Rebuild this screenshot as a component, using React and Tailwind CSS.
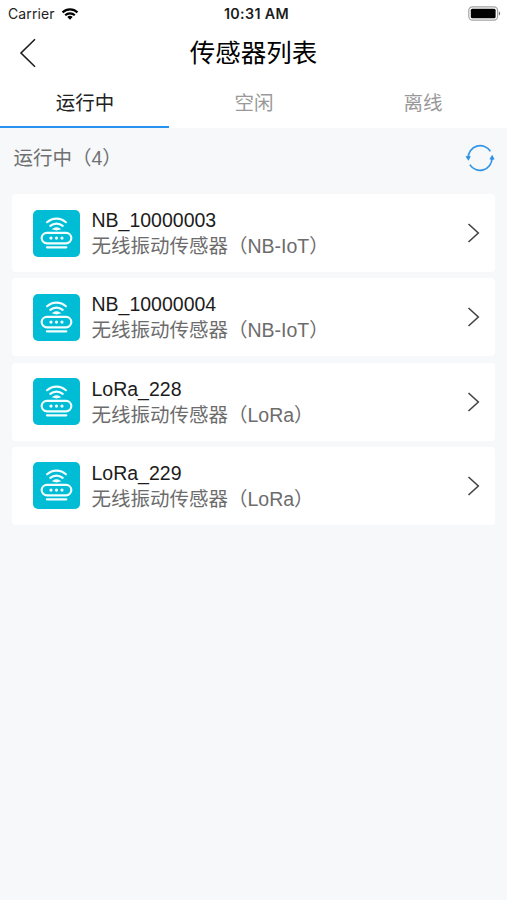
const sensors = [
  { name: 'NB_10000003', type: '无线振动传感器（NB-IoT）' },
  { name: 'NB_10000004', type: '无线振动传感器（NB-IoT）' },
  { name: 'LoRa_228', type: '无线振动传感器（LoRa）' },
  { name: 'LoRa_229', type: '无线振动传感器（LoRa）' },
];

const tabs = ['运行中', '空闲', '离线'];

function WifiIcon() {
  return (
    <svg className="ml-[6px] h-[12px] w-[18px]" viewBox="0 0 17 12" fill="none" stroke="#000" strokeWidth="2.2">
      <path d="M1 4.4a10.8 10.8 0 0 1 15 0" />
      <path d="M3.7 7.3a6.8 6.8 0 0 1 9.6 0" />
      <path d="M8.5 11.8 5.8 9a3.9 3.9 0 0 1 5.4 0z" fill="#000" stroke="none" />
    </svg>
  );
}

function BatteryIcon() {
  return (
    <svg className="h-[15px] w-[33px]" viewBox="0 0 33 15">
      <rect x="0.8" y="0.8" width="28.8" height="13.4" rx="3.6" fill="none" stroke="#a3a3a3" strokeWidth="1.2" />
      <rect x="2.8" y="2.8" width="24.8" height="9.4" rx="1.5" fill="#000" />
      <path d="M30.9 5.5c1.7.5 1.7 3.5 0 4z" fill="#777" />
    </svg>
  );
}

function RefreshIcon() {
  return (
    <svg className="h-[30px] w-[30px]" viewBox="0 0 30 30" fill="none" stroke="#3596e8" strokeWidth="1.7">
      <path d="M3.2 14.8A12 12 0 0 1 25.4 8.4" />
      <path d="M27 15.2A12 12 0 0 1 4.8 21.6" />
      <path d="M.6 13.6 3 12.8l2.8.8-2.4 4.2zM24.4 16.2l2.8.8 2.4-.8-2.4-4.4z" fill="#2f92e6" stroke="none" />
    </svg>
  );
}

function RouterIcon() {
  return (
    <svg
      className="h-[47px] w-[47px] shrink-0 rounded-[5px] bg-[#00bcd4]"
      viewBox="0 0 47 47"
      fill="none"
      stroke="#f2fdff"
      strokeWidth="2.2"
      strokeLinecap="round"
    >
      <path d="M14.1 12.2a14 14 0 0 1 18.8 0M17.3 15.8a9.6 9.6 0 0 1 12.4 0" />
      <path d="M20.3 19a5.6 5.6 0 0 1 6.4 0l-3.2.8z" fill="#f2fdff" strokeWidth="1.4" />
      <rect x="8.7" y="22.9" width="29.6" height="10.4" rx="5.2" />
      <path d="M13.9 37.3h19.4" />
      <g fill="#f2fdff" stroke="none">
        <circle cx="18" cy="28.1" r="1.6" />
        <circle cx="23.5" cy="28.1" r="1.6" />
        <circle cx="29" cy="28.1" r="1.6" />
      </g>
    </svg>
  );
}

export default function App() {
  return (
    <div className="flex h-[900px] w-[507px] flex-col overflow-hidden bg-[#f6f8fa] font-['Liberation_Sans','Noto_Sans_CJK_SC',sans-serif] text-[19.5px] text-[#1c1c1c]">
      <header className="bg-white">
        <div className="grid h-[27px] grid-cols-[1fr_auto_1fr] items-center pr-[6px] pl-[8px] font-['Inter',sans-serif] text-[14px] leading-none">
          <div className="flex items-center pt-px tracking-[0.1px] text-[#222]">
            Carrier
            <WifiIcon />
          </div>
          <div className="pt-px pl-[4px] text-[14.3px] font-semibold tracking-[0.35px]">10:31 AM</div>
          <div className="flex justify-end"><BatteryIcon /></div>
        </div>
        <div className="grid h-[51px] grid-cols-[50px_1fr_50px] items-center">
          <svg className="ml-[19px] h-[30px] w-[18px]" viewBox="0 0 18 30" fill="none" stroke="#1c1c1c" strokeWidth="1.6">
            <path d="M16 1.2 2 15l14 13.8" />
          </svg>
          <h1 className="pt-px text-center text-[25.5px] leading-[36px] text-black">传感器列表</h1>
        </div>
        <nav className="grid h-[50px] grid-cols-3">
          {tabs.map((tab, i) => (
            <button
              key={tab}
              className={
                i === 0
                  ? 'border-b-2 border-[#2593ef] pt-[3px] pl-px text-center text-[#222]'
                  : 'border-b-2 border-transparent pt-[3px] pl-px text-center text-[#999]'
              }
            >
              {tab}
            </button>
          ))}
        </nav>
      </header>
      <div className="flex h-[66px] items-start justify-between pr-[12px] pl-[13.5px]">
        <h2 className="pt-[15px] leading-[30px] text-[#707070]">运行中（4）</h2>
        <button className="pt-[15px]"><RefreshIcon /></button>
      </div>
      <main className="flex flex-col gap-[6.3px] px-[12px]">
        {sensors.map((sensor) => (
          <article key={sensor.name} className="flex h-[78px] items-center rounded-[4px] bg-white pr-[15.5px] pl-[20.5px]">
            <RouterIcon />
            <div className="ml-[12px] flex-1 leading-[26px]">
              <div>{sensor.name}</div>
              <div className="whitespace-nowrap text-[#6c6c6c]">{sensor.type}</div>
            </div>
            <svg className="h-[20px] w-[13px]" viewBox="0 0 13 20" fill="none" stroke="#444" strokeWidth="1.6">
              <path d="m1.5 1 9.8 9-9.8 9" />
            </svg>
          </article>
        ))}
      </main>
    </div>
  );
}
